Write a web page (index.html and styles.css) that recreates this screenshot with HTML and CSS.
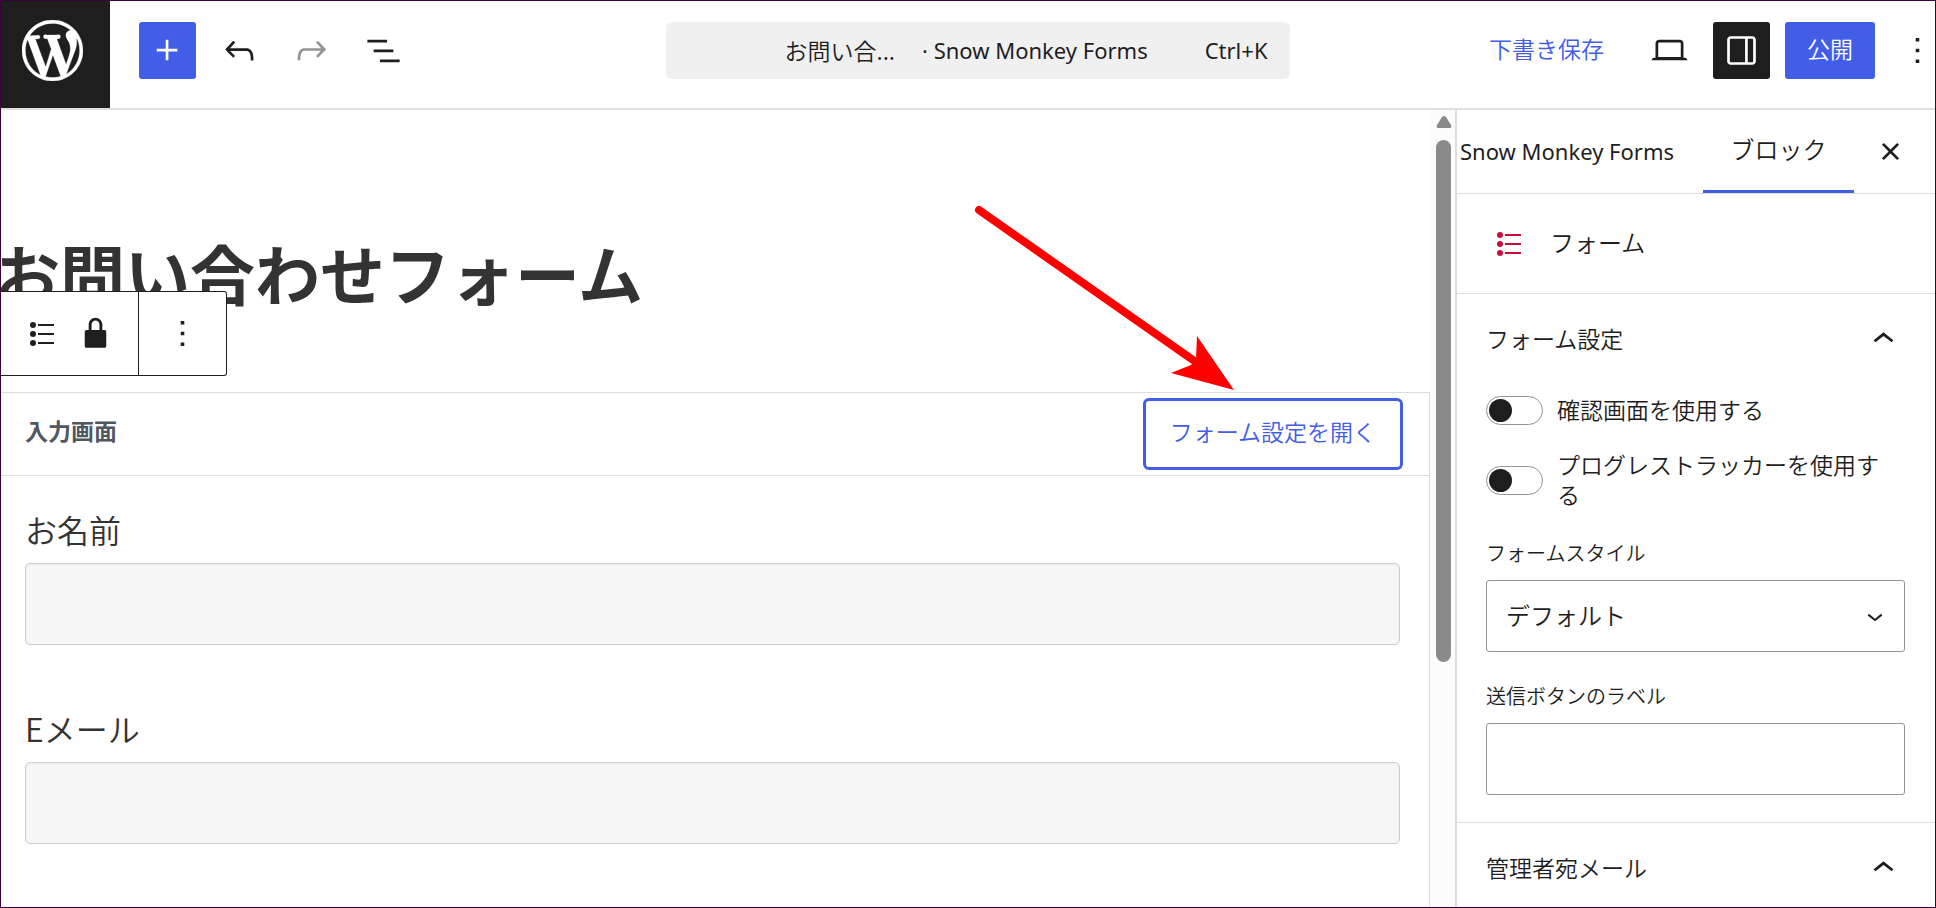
FILE: index.html
```html
<!DOCTYPE html>
<html lang="ja">
<head>
  <meta charset="utf-8">
  <title>お問い合わせフォーム</title>
  <link rel="stylesheet" href="styles.css">
</head>
<body>

<div class="editor">
  <header class="topbar">
    <a class="wp-logo" href="#" aria-label="WordPress">
      <svg viewBox="0 0 20 20"><path d="M20 10c0-5.51-4.49-10-10-10C4.48 0 0 4.49 0 10c0 5.52 4.48 10 10 10 5.51 0 10-4.48 10-10zM7.78 15.37L4.37 6.22c.55-.02 1.17-.08 1.17-.08.5-.06.44-1.13-.06-1.11 0 0-1.45.11-2.37.11-.18 0-.37 0-.58-.01C4.12 2.69 6.87 1.11 10 1.11c2.33 0 4.45.87 6.05 2.34-.68-.11-1.65.39-1.65 1.58 0 .74.45 1.36.9 2.1.35.61.55 1.36.55 2.46 0 1.49-1.4 5-1.4 5l-3.03-8.37c.54-.02.82-.17.82-.17.5-.05.44-1.25-.06-1.22 0 0-1.44.12-2.38.12-.87 0-2.33-.12-2.33-.12-.5-.03-.56 1.2-.06 1.22l.92.08 1.26 3.41zM17.41 10c.24-.64.74-1.87.43-4.25.7 1.29 1.05 2.71 1.05 4.25 0 3.29-1.73 6.24-4.4 7.78.97-2.59 1.94-5.2 2.92-7.78zM6.1 18.09C3.12 16.65 1.11 13.53 1.11 10c0-1.3.23-2.48.72-3.59C3.25 10.3 4.67 14.2 6.1 18.09zm4.03-6.63l2.58 6.98c-.86.29-1.76.45-2.71.45-.79 0-1.57-.11-2.29-.33.81-2.38 1.62-4.74 2.42-7.1z"/></svg>
    </a>
    <div class="tools">
      <button class="icon-btn primary" aria-label="ブロック挿入"><svg viewBox="0 0 24 24"><path d="M11 12.5V17.5H12.5V12.5H17.5V11H12.5V6H11V11H6V12.5H11Z"/></svg></button>
      <button class="icon-btn" aria-label="元に戻す"><svg viewBox="0 0 24 24"><path d="M18.3 11.7c-.6-.6-1.4-.9-2.3-.9H6.7l2.9-3.3-1.1-1-4.5 5L8.5 16l1-1-2.7-2.7H16c.5 0 .9.2 1.3.5 1 1 1 3.4 1 4.5v.3h1.5v-.2c0-1.5 0-4.3-1.5-5.7z"/></svg></button>
      <button class="icon-btn" disabled aria-label="やり直す"><svg viewBox="0 0 24 24"><path d="M15.6 6.5l-1.1 1 2.9 3.3H8c-.9 0-1.7.3-2.3.9-1.4 1.5-1.4 4.2-1.4 5.6v.2h1.5v-.3c0-1.1 0-3.5 1-4.5.3-.3.7-.5 1.3-.5h9.2L14.5 15l1.1 1.1 4.6-4.6-4.6-5z"/></svg></button>
      <button class="icon-btn" aria-label="リスト表示"><svg viewBox="0 0 24 24"><path d="M3 6h11v1.5H3V6Zm3.5 5.5h11V13h-11v-1.5ZM21 17H10v1.5h11V17Z"/></svg></button>
    </div>
    <button class="command">
      <span class="command-title">お問い合...</span>
      <span class="command-type">· Snow Monkey Forms</span>
      <span class="command-key">Ctrl+K</span>
    </button>
    <div class="actions">
      <button class="link-btn">下書き保存</button>
      <button class="icon-btn" aria-label="表示"><svg viewBox="0 0 24 24"><path d="M20.5 16h-.7V8c0-1.1-.9-2-2-2H6.2c-1.1 0-2 .9-2 2v8h-.7c-.8 0-1.5.7-1.5 1.5h20c0-.8-.7-1.5-1.5-1.5zM5.7 8c0-.3.2-.5.5-.5h11.6c.3 0 .5.2.5.5v7.6H5.7V8z"/></svg></button>
      <button class="icon-btn pressed" aria-label="設定"><svg viewBox="0 0 24 24"><path d="M18 4H6c-1.1 0-2 .9-2 2v12c0 1.1.9 2 2 2h12c1.1 0 2-.9 2-2V6c0-1.1-.9-2-2-2zm-4 14.5H6c-.3 0-.5-.2-.5-.5V6c0-.3.2-.5.5-.5h8v13zm4.5-.5c0 .3-.2.5-.5.5h-2.5v-13H18c.3 0 .5.2.5.5v12z"/></svg></button>
      <button class="publish-btn">公開</button>
      <button class="icon-btn more" aria-label="オプション"><svg viewBox="0 0 24 24"><path d="M13 19h-2v-2h2v2zm0-6h-2v-2h2v2zm0-6h-2V5h2v2z"/></svg></button>
    </div>
  </header>

  <div class="body">
    <main class="canvas">
      <h1 class="post-title">お問い合わせフォーム</h1>

      <section class="form-block">
        <div class="block-toolbar">
          <div class="toolbar-group">
            <button aria-label="フォーム"><svg class="form-icon" viewBox="0 0 24 24"><path d="M8 2h16v2H8zM8 11h16v2H8zM8 20h16v2H8z"/><circle cx="3" cy="3" r="3"/><circle cx="3" cy="12" r="3"/><circle cx="3" cy="21" r="3"/></svg></button>
            <button aria-label="ロック解除"><svg class="icon" viewBox="0 0 24 24"><path d="M17 10h-1.2V7c0-2.1-1.7-3.8-3.8-3.8-2.1 0-3.8 1.7-3.8 3.8v3H7c-.6 0-1 .4-1 1v8c0 .6.4 1 1 1h10c.6 0 1-.4 1-1v-8c0-.6-.4-1-1-1zM9.8 7c0-1.2 1-2.2 2.2-2.2 1.2 0 2.2 1 2.2 2.2v3H9.8V7z"/></svg></button>
          </div>
          <div class="toolbar-group">
            <button aria-label="オプション"><svg class="icon" viewBox="0 0 24 24"><path d="M13 19h-2v-2h2v2zm0-6h-2v-2h2v2zm0-6h-2V5h2v2z"/></svg></button>
          </div>
        </div>

        <!-- annotation arrow pointing at the settings button -->
        <svg class="arrow" viewBox="0 0 260 190"><path class="shaft" d="M8 10L222 160"/><path d="M263 190L200 173L220 165L225 159L226 136Z"/></svg>

        <div class="form-head">
          <strong>入力画面</strong>
          <button class="open-settings">フォーム設定を開く</button>
        </div>
        <div class="form-fields">
          <div class="field">
            <label for="name">お名前</label>
            <input type="text" id="name">
          </div>
          <div class="field">
            <label for="email">Eメール</label>
            <input type="email" id="email">
          </div>
        </div>
      </section>
    </main>

    <div class="scrollbar">
      <svg viewBox="0 0 16 12"><path d="M8 0Q9 0 10 1L15 9Q16 12 14 12H2Q0 12 1 9L6 1Q7 0 8 0Z"/></svg>
      <div class="thumb"></div>
    </div>

    <aside class="sidebar">
      <div class="tabs">
        <button class="tab">Snow Monkey Forms</button>
        <button class="tab active">ブロック</button>
        <button class="close" aria-label="設定を閉じる"><svg class="icon" viewBox="0 0 24 24"><path d="M12 13.06l3.712 3.713 1.061-1.06L13.061 12l3.712-3.712-1.06-1.06L12 10.938 8.288 7.227l-1.061 1.06L10.939 12l-3.712 3.712 1.06 1.061L12 13.061z"/></svg></button>
      </div>

      <div class="block-card">
        <svg class="form-icon" viewBox="0 0 24 24"><path d="M8 2h16v2H8zM8 11h16v2H8zM8 20h16v2H8z"/><circle cx="3" cy="3" r="3"/><circle cx="3" cy="12" r="3"/><circle cx="3" cy="21" r="3"/></svg>
        <span>フォーム</span>
      </div>

      <section class="panel">
        <button class="panel-title"><span>フォーム設定</span><svg class="icon" viewBox="0 0 24 24"><path d="M6.5 12.4L12 8l5.5 4.4-.9 1.2L12 10l-4.5 3.6-1-1.2z"/></svg></button>
        <div class="toggle-row">
          <input type="checkbox" id="confirm">
          <label for="confirm">確認画面を使用する</label>
        </div>
        <div class="toggle-row">
          <input type="checkbox" id="tracker">
          <label for="tracker">プログレストラッカーを使用する</label>
        </div>
        <div class="control">
          <label for="style">フォームスタイル</label>
          <div class="select-wrap">
            <select id="style"><option>デフォルト</option></select>
            <svg viewBox="0 0 24 24"><path d="M17.5 11.6L12 16l-5.5-4.4.9-1.2L12 14l4.5-3.6 1 1.2z"/></svg>
          </div>
        </div>
        <div class="control">
          <label for="submit">送信ボタンのラベル</label>
          <input type="text" id="submit">
        </div>
      </section>

      <section class="panel">
        <button class="panel-title"><span>管理者宛メール</span><svg class="icon" viewBox="0 0 24 24"><path d="M6.5 12.4L12 8l5.5 4.4-.9 1.2L12 10l-4.5 3.6-1-1.2z"/></svg></button>
      </section>
    </aside>
  </div>
</div>

</body>
</html>
```
FILE: styles.css
```css
* { box-sizing: border-box; }

body {
  margin: 0;
  font-family: "Noto Sans CJK JP", sans-serif;
  font-weight: 350;
  font-size: 23px;
  line-height: 30px;
  color: #1e1e1e;
  background: #fff;
}

button, input, select {
  font: inherit;
  color: inherit;
}

button {
  margin: 0;
  padding: 0;
  background: none;
  border: none;
  cursor: pointer;
}

svg {
  display: block;
  flex-shrink: 0;
  fill: currentColor;
}

.editor {
  display: flex;
  flex-direction: column;
  height: 100vh;
  border: 1px solid #3c003c;
  overflow: hidden;
}

.icon {
  width: 43px;
  height: 43px;
}

.form-icon {
  width: 24px;
  height: 24px;
}

/* top bar */
.topbar {
  display: flex;
  flex-shrink: 0;
  height: 109px;
  border-bottom: 2px solid #e0e0e0;
}

.wp-logo {
  width: 109px;
  padding: 19px 0 0 21px;
  background: #1e1e1e;
  color: #fff;
}

.wp-logo svg {
  width: 61px;
  height: 61px;
  stroke: currentColor;
  stroke-width: 0.1;
}

.tools, .actions {
  display: flex;
  padding-top: 21px;
}

.tools {
  gap: 15px;
  padding-left: 29px;
  padding-right: 54px;
}

.icon-btn {
  display: flex;
  align-items: center;
  justify-content: center;
  width: 57px;
  height: 57px;
  border-radius: 3px;
}

.icon-btn svg {
  width: 43px;
  height: 43px;
}

.icon-btn.primary {
  background: #425de6;
  color: #fff;
}

.icon-btn.pressed {
  background: #1e1e1e;
  color: #fff;
  margin: 0 15px;
}

.icon-btn:disabled { color: #949494; }

.icon-btn.more {
  width: 44px;
  margin-left: 20px;
  margin-right: -4px;
}

.command {
  display: flex;
  align-items: center;
  width: 624px;
  height: 57px;
  margin: 21px auto 0;
  padding: 0 22px 2px 119px;
  background: #f0f0f0;
  border-radius: 6px;
}

.command-type, .command-key, .tab {
  font-family: "Noto Sans", "Noto Sans CJK JP", sans-serif;
  font-weight: 400;
  font-size: 22px;
}

.command-type { margin-left: 27px; }

.command-key { margin-left: auto; }

.link-btn {
  height: 57px;
  margin-right: 37px;
  padding-bottom: 5px;
  color: #425de6;
}

.publish-btn {
  width: 90px;
  height: 57px;
  padding-bottom: 5px;
  background: #425de6;
  color: #fff;
  border-radius: 3px;
}

.body {
  display: flex;
  flex: 1;
  min-height: 0;
}

/* canvas */
.canvas {
  flex: 1;
  min-width: 0;
  overflow: hidden;
}

.post-title {
  margin: 0 0 81px -6px;
  padding-top: 123px;
  font-size: 65px;
  font-weight: 700;
  line-height: 78px;
  color: #333;
  white-space: nowrap;
}

.form-block {
  position: relative;
  height: 600px;
  border-top: 1px solid #ddd;
  border-right: 1px solid #ddd;
}

.block-toolbar {
  position: absolute;
  top: -102px;
  left: 0;
  display: flex;
  height: 85px;
  background: #fff;
  border: 1px solid #1e1e1e;
  border-left: none;
  border-radius: 0 3px 3px 0;
}

.toolbar-group {
  display: flex;
  align-items: center;
  justify-content: center;
  gap: 20px;
  width: 87px;
}

.toolbar-group:first-child {
  width: 138px;
  padding-left: 8px;
  border-right: 1px solid #1e1e1e;
}

.arrow {
  position: absolute;
  top: -193px;
  right: 198px;
  width: 260px;
  height: 190px;
  fill: #f00;
  overflow: visible;
}

.arrow .shaft {
  fill: none;
  stroke: #f00;
  stroke-width: 8;
  stroke-linecap: round;
}

.form-head {
  display: flex;
  align-items: center;
  justify-content: space-between;
  height: 83px;
  padding: 0 26px 0 24px;
  border-bottom: 1px solid #ddd;
}

.form-head strong {
  padding-bottom: 9px;
  font-weight: 700;
  color: #50575e;
}

.open-settings {
  height: 72px;
  padding: 0 24px 7px;
  color: #425de6;
  border: 3px solid #425de6;
  border-radius: 6px;
}

.form-fields {
  display: flex;
  flex-direction: column;
  gap: 59px;
  padding: 29px 29px 0 24px;
}

.field label {
  display: block;
  margin-bottom: 10px;
  font-size: 32px;
  line-height: 48px;
  color: #333;
}

.field input {
  display: block;
  width: 100%;
  height: 82px;
  background: #f7f7f7;
  border: 1px solid #ccc;
  border-radius: 5px;
  box-shadow: inset 0 1px 3px rgba(0, 0, 0, 0.06);
}

.scrollbar {
  display: flex;
  flex-direction: column;
  align-items: center;
  gap: 12px;
  width: 25px;
  padding: 6px 0 0 2px;
  background: #fcfcfc;
  color: #8a8a8a;
}

.scrollbar svg {
  width: 16px;
  height: 12px;
}

.thumb {
  width: 15px;
  height: 522px;
  background: #8a8a8a;
  border-radius: 8px;
}

/* settings sidebar */
.sidebar {
  width: 480px;
  border-left: 2px solid #ddd;
  overflow: hidden;
}

.tabs {
  display: flex;
  height: 84px;
  border-bottom: 1px solid #ddd;
}

.tab {
  padding: 0 29px 2px 3px;
  white-space: nowrap;
}

.tab.active {
  width: 151px;
  padding: 0;
  font-size: 24px;
  font-weight: 350;
  border-bottom: 3px solid #425de6;
}

.close { margin: 0 23px 0 auto; }

.block-card {
  display: flex;
  align-items: center;
  gap: 29px;
  height: 100px;
  padding-left: 40px;
  font-size: 24px;
  border-bottom: 1px solid #ddd;
}

.block-card .form-icon { color: #cd0a3a; }

.block-card span, .panel-title span { padding-bottom: 3px; }

.panel {
  padding: 0 30px 27px 29px;
  border-bottom: 1px solid #ddd;
}

.panel-title {
  display: flex;
  align-items: center;
  justify-content: space-between;
  width: 100%;
  height: 90px;
}

.toggle-row {
  display: flex;
  align-items: center;
  gap: 14px;
  min-height: 52px;
  margin-bottom: 16px;
}

.toggle-row label {
  margin: -3px 0 0;
  padding-right: 16px;
}

.toggle-row input {
  appearance: none;
  flex-shrink: 0;
  width: 57px;
  height: 29px;
  margin: 0;
  padding: 2px;
  border: 1px solid #949494;
  border-radius: 15px;
}

.toggle-row input::before {
  content: "";
  display: block;
  width: 23px;
  height: 23px;
  border-radius: 50%;
  background: #1e1e1e;
}

.control { margin-top: 28px; }

.control label {
  display: block;
  margin-bottom: 12px;
  font-size: 20px;
  line-height: 31px;
}

.control input, .control select {
  display: block;
  appearance: none;
  width: 100%;
  height: 72px;
  padding: 0 19px 2px;
  font-size: 24px;
  background: #fff;
  border: 1px solid #949494;
  border-radius: 3px;
}

.select-wrap { position: relative; }

.select-wrap svg {
  position: absolute;
  top: 20px;
  right: 14px;
  width: 32px;
  height: 32px;
  pointer-events: none;
}
```
